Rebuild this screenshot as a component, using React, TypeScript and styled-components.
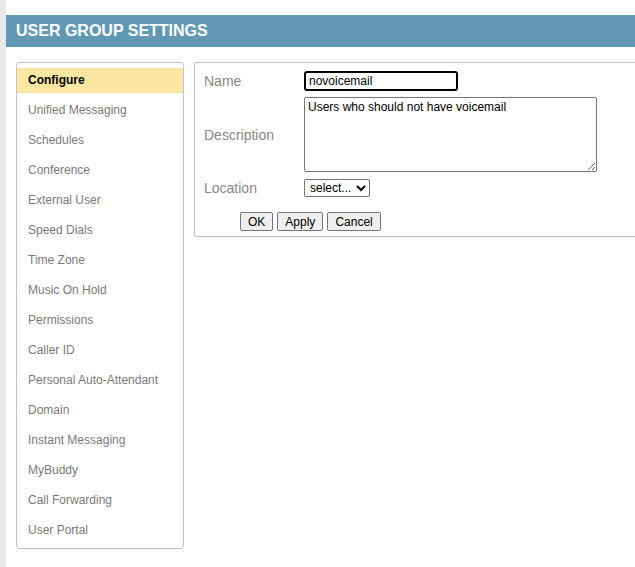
import React from 'react';
import styled, { createGlobalStyle } from 'styled-components';

const GlobalStyle = createGlobalStyle`
  html, body {
    margin: 0;
    padding: 0;
    background: #e9e9e9;
    font-family: 'Liberation Sans', Arial, sans-serif;
  }
`;

const Page = styled.div`
  margin-left: 6px;
  min-height: 567px;
  background: #fff;
  padding-top: 15px;
  box-sizing: border-box;
`;

const Header = styled.div`
  height: 32px;
  background: #6199b4;
  color: #fff;
  font-weight: 700;
  font-size: 16px;
  line-height: 32px;
  padding-left: 10px;
`;

const Body = styled.div`
  display: flex;
  align-items: flex-start;
  gap: 10px;
  padding: 15px 0 0 10px;
`;

const Sidebar = styled.ul`
  list-style: none;
  margin: 0;
  padding: 5px 0;
  width: 166px;
  border: 1px solid #c4c4c4;
  border-radius: 3px;
  display: flex;
  flex-direction: column;
  gap: 5px;
`;

const NavItem = styled.li<{ $active?: boolean }>`
  height: 25px;
  line-height: 25px;
  padding-left: 11px;
  font-size: 12px;
  color: ${({ $active }) => ($active ? '#000' : '#7a7a7a')};
  font-weight: ${({ $active }) => ($active ? 700 : 400)};
  background: ${({ $active }) => ($active ? '#fde6a1' : 'transparent')};
`;

const Panel = styled.div`
  flex: 1;
  border: 1px solid #c4c4c4;
  border-right: none;
  border-radius: 3px 0 0 3px;
  padding: 8px 0 5px 9px;
`;

const FormGrid = styled.div`
  display: grid;
  grid-template-columns: 100px auto;
  row-gap: 6px;
  align-items: center;
`;

const Label = styled.label`
  font-size: 14px;
  color: #888;
`;

const TextInput = styled.input`
  box-sizing: border-box;
  width: 154px;
  height: 20px;
  border: 2px solid #000;
  border-radius: 3px;
  padding: 0 3px;
  font: 12px 'Liberation Sans', Arial, sans-serif;
  color: #000;
  outline: none;
`;

const TextArea = styled.textarea`
  box-sizing: border-box;
  width: 293px;
  height: 75px;
  border: 1px solid #767676;
  border-radius: 2px;
  padding: 2px 3px;
  font: 12px 'Liberation Sans', Arial, sans-serif;
  color: #000;
  resize: both;
  display: block;
`;

const Select = styled.select`
  box-sizing: border-box;
  width: 66px;
  height: 18px;
  margin-top: 1px;
  border: 1px solid #767676;
  border-radius: 2px;
  font: 12px 'Liberation Sans', Arial, sans-serif;
  color: #000;
  background: #fff;
  padding: 0 1px;
  display: block;
`;

const ButtonRow = styled.div`
  display: flex;
  gap: 4px;
  margin: 15px 0 0 36px;
`;

const Button = styled.button`
  box-sizing: border-box;
  height: 19px;
  padding: 0 7px;
  background: #efefef;
  border: 1px solid #767676;
  border-radius: 2px;
  font: 12px 'Liberation Sans', Arial, sans-serif;
  color: #000;
`;

const navItems = [
  'Configure',
  'Unified Messaging',
  'Schedules',
  'Conference',
  'External User',
  'Speed Dials',
  'Time Zone',
  'Music On Hold',
  'Permissions',
  'Caller ID',
  'Personal Auto-Attendant',
  'Domain',
  'Instant Messaging',
  'MyBuddy',
  'Call Forwarding',
  'User Portal',
];

const App = () => {
  return (
    <>
      <GlobalStyle />
      <Page>
        <Header>USER GROUP SETTINGS</Header>
        <Body>
          <Sidebar>
            {navItems.map((item, i) => (
              <NavItem key={item} $active={i === 0}>
                {item}
              </NavItem>
            ))}
          </Sidebar>
          <Panel>
            <FormGrid>
              <Label>Name</Label>
              <TextInput defaultValue="novoicemail" />
              <Label>Description</Label>
              <TextArea defaultValue="Users who should not have voicemail" />
              <Label>Location</Label>
              <Select defaultValue="">
                <option value="">select...</option>
              </Select>
            </FormGrid>
            <ButtonRow>
              <Button>OK</Button>
              <Button>Apply</Button>
              <Button>Cancel</Button>
            </ButtonRow>
          </Panel>
        </Body>
      </Page>
    </>
  );
};

export default App;
